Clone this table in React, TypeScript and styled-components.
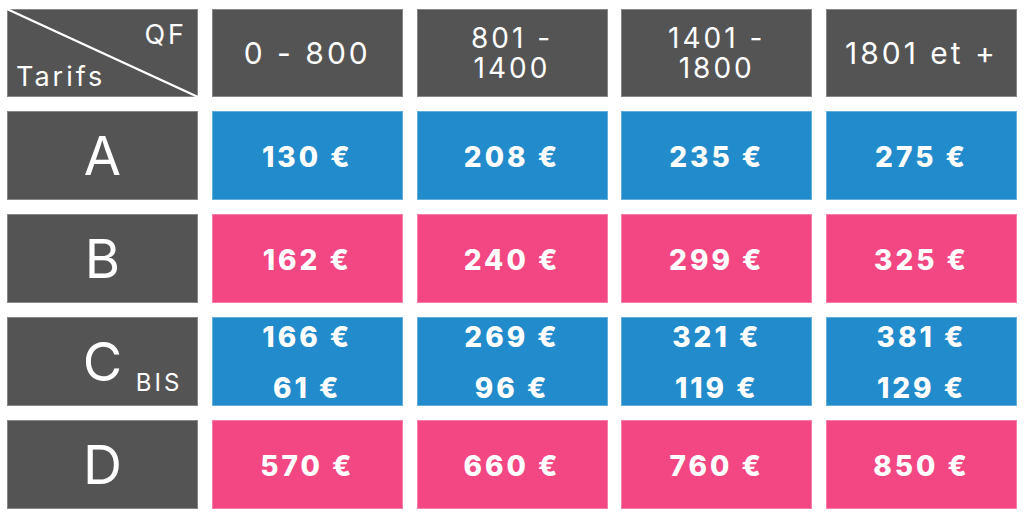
import { createGlobalStyle } from "styled-components";
import styled from "styled-components";

const GlobalStyle = createGlobalStyle`
  html, body {
    margin: 0;
    padding: 0;
    background: #ffffff;
  }
  body {
    font-family: Inter, "DejaVu Sans", sans-serif;
  }
`;

type Tone = "dark" | "blue" | "pink";

const TONES: Record<Tone, string> = {
  dark: "#545454",
  blue: "#228bcb",
  pink: "#f34784",
};

const Page = styled.div`
  padding: 9px 7px 8px 7px;
`;

const Grid = styled.div`
  display: grid;
  grid-template-columns: repeat(5, 1fr);
  grid-template-rows: 88px 89px 89px 89px 89px;
  column-gap: 13.75px;
  row-gap: 14px;
  width: 1010px;
`;

const Cell = styled.div<{ $tone: Tone }>`
  background: ${(p) => TONES[p.$tone]};
  box-shadow: inset 0 0 0 1px rgba(255, 255, 255, 0.3);
  color: #ffffff;
  display: flex;
  flex-direction: column;
  align-items: center;
  justify-content: center;
  text-align: center;
`;

const Corner = styled(Cell)`
  position: relative;
  overflow: hidden;
`;

const Diagonal = styled.svg`
  position: absolute;
  inset: 0;
  width: 100%;
  height: 100%;
`;

const CornerLabel = styled.span<{ $top?: boolean }>`
  position: absolute;
  font-size: 27px;
  font-weight: 400;
  letter-spacing: 3px;
  line-height: 1;
  ${(p) => (p.$top ? "top: 12px; right: 11px;" : "bottom: 7px; left: 9px;")}
`;

const Range = styled.div<{ $split?: boolean }>`
  font-size: ${(p) => (p.$split ? "28px" : "30px")};
  font-weight: 400;
  letter-spacing: 3px;
  line-height: ${(p) => (p.$split ? "30px" : "34px")};
  white-space: pre-line;
`;

const Letter = styled.div`
  position: relative;
  font-size: 54px;
  font-weight: 400;
  line-height: 1;
`;

const Bis = styled.span`
  position: absolute;
  left: 53px;
  bottom: -6px;
  font-size: 24px;
  font-weight: 400;
  letter-spacing: 3px;
`;

const Price = styled.div<{ $small?: boolean }>`
  font-size: 28px;
  font-weight: 800;
  letter-spacing: 3px;
  line-height: ${(p) => (p.$small ? "49px" : "34px")};
  padding-top: ${(p) => (p.$small ? "2px" : "3px")};
`;

const ranges = ["0 - 800", "801 -\n1400", "1401 -\n1800", "1801 et +"];

const rows: { label: string; tone: Tone; prices: string[][]; bis?: boolean }[] = [
  { label: "A", tone: "blue", prices: [["130 €"], ["208 €"], ["235 €"], ["275 €"]] },
  { label: "B", tone: "pink", prices: [["162 €"], ["240 €"], ["299 €"], ["325 €"]] },
  {
    label: "C",
    tone: "blue",
    bis: true,
    prices: [
      ["166 €", "61 €"],
      ["269 €", "96 €"],
      ["321 €", "119 €"],
      ["381 €", "129 €"],
    ],
  },
  { label: "D", tone: "pink", prices: [["570 €"], ["660 €"], ["760 €"], ["850 €"]] },
];

export default function App() {
  return (
    <Page>
      <GlobalStyle />
      <Grid>
        <Corner $tone="dark">
          <Diagonal viewBox="0 0 191 88" preserveAspectRatio="none">
            <line x1="0" y1="0" x2="191" y2="88" stroke="#ffffff" strokeWidth="2.2" />
          </Diagonal>
          <CornerLabel $top>QF</CornerLabel>
          <CornerLabel>Tarifs</CornerLabel>
        </Corner>
        {ranges.map((r) => (
          <Cell key={r} $tone="dark">
            <Range $split={r.includes("\n")}>{r}</Range>
          </Cell>
        ))}

        {rows.map((row) => [
          <Cell key={row.label} $tone="dark">
            <Letter>
              {row.label}
              {row.bis ? <Bis>BIS</Bis> : null}
            </Letter>
          </Cell>,
          ...row.prices.map((p, i) => (
            <Cell key={row.label + i} $tone={row.tone}>
              {p.map((v) => (
                <Price key={v} $small={p.length > 1}>
                  {v}
                </Price>
              ))}
            </Cell>
          )),
        ])}
      </Grid>
    </Page>
  );
}
